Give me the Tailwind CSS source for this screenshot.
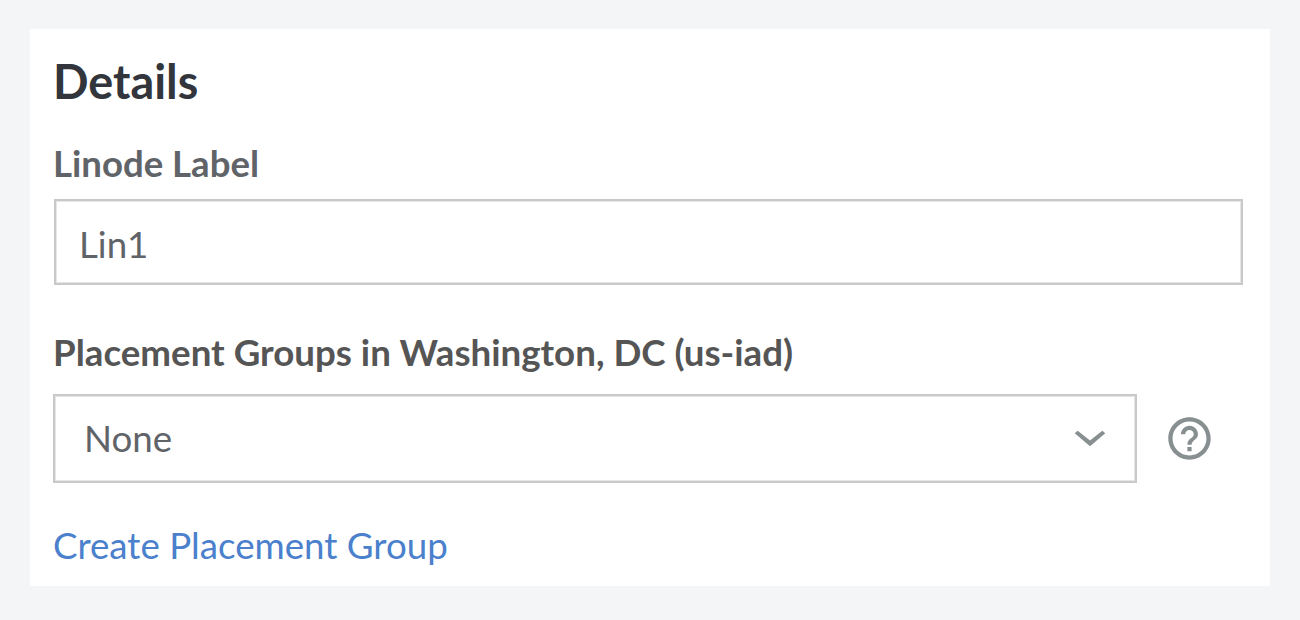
<!DOCTYPE html>
<html lang="en">
<head>
<meta charset="utf-8">
<title>Details</title>
<script src="https://cdn.jsdelivr.net/npm/@tailwindcss/browser@4"></script>
</head>
<body class="bg-[#f4f5f7] w-[1300px] h-[620px] overflow-hidden pt-[29px] pl-[30px] font-[Lato,sans-serif]">
<main class="w-[1240px] h-[557px] bg-white pl-[23px] flex flex-col items-start whitespace-nowrap">
  <h1 class="mt-[24px] h-14 leading-[56px] text-[46.8px] font-bold text-[#32363c]">Details</h1>
  <label class="block mt-[30px] h-[48px] leading-[48px] text-[36.6px] font-bold text-[#606469]">Linode Label</label>
  <div class="mt-[12px] ml-px w-[1189px] h-[86px] border-2 border-[#c9c9c9] shadow-[inset_0_0_0_1px_#e6e6e6] pl-[23px] pt-[5px] flex items-center text-[36.7px] text-[#606469]"><span>Lin1</span></div>
  <label class="block mt-[43px] h-[48px] leading-[48px] text-[36.7px] font-bold text-[#555555]">Placement Groups in Washington, DC (us-iad)</label>
  <div class="mt-[18px] flex items-center gap-[31px]">
    <div class="w-[1084px] h-[89px] border-2 border-[#c9c9c9] shadow-[inset_0_0_0_1px_#e6e6e6] pl-[29px] pr-[29px] flex items-center justify-between text-[36.7px] text-[#606469]">
      <span>None</span>
      <svg class="w-8 h-[17px]" viewBox="0 0 32 17" fill="#888f91"><path d="M3.7.7L.7 3.300L16 16.300L31.300 3.300L28.300.7L16 10.500z"/></svg>
    </div>
    <svg class="w-[43px] h-[43px]" viewBox="1.86 1.86 20.28 20.28" fill="#888f91"><path d="M11 18h2v-2h-2v2zm1-16C6.48 2 2 6.48 2 12s4.48 10 10 10 10-4.480 10-10S17.520 2 12 2zm0 18c-4.410 0-8-3.590-8-8s3.590-8 8-8 8 3.590 8 8-3.590 8-8 8zm0-14c-2.210 0-4 1.790-4 4h2c0-1.100.9-2 2-2s2 .9 2 2c0 2-3 1.750-3 5h2c0-2.250 3-2.500 3-5 0-2.210-1.790-4-4-4z"/></svg>
  </div>
  <a class="block mt-[38px] h-[48px] leading-[48px] text-[36.7px] text-[#4a80cc]">Create Placement Group</a>
</main>
</body>
</html>
